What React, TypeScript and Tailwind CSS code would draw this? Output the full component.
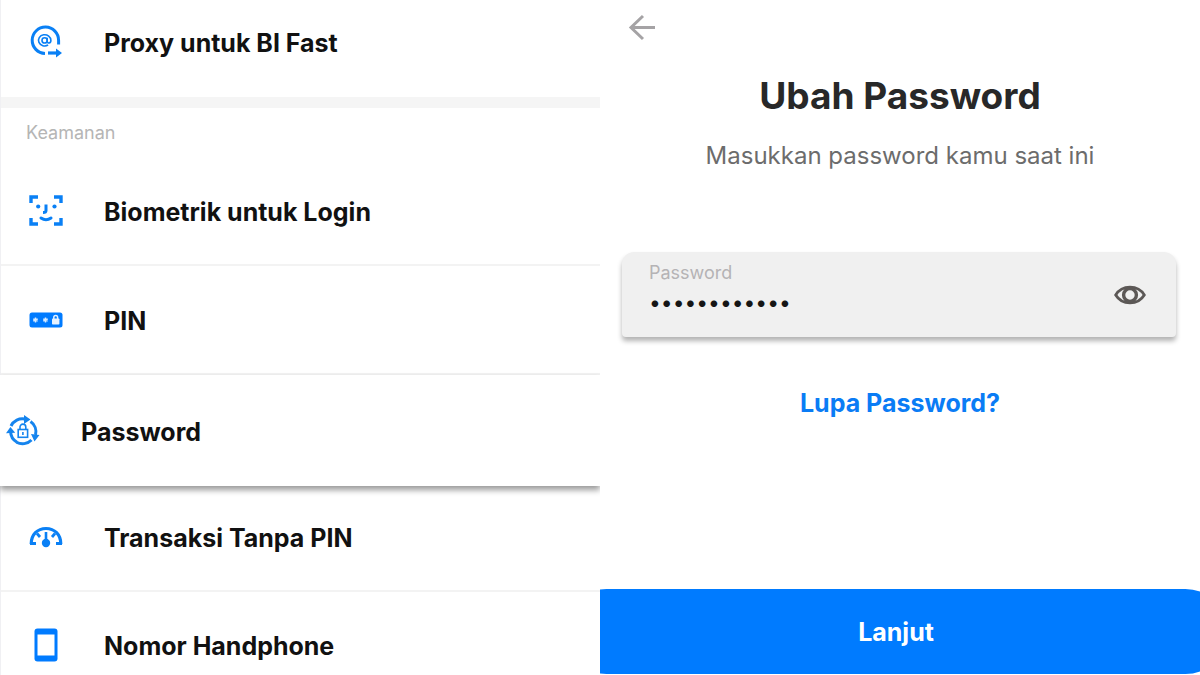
import React, { useState } from "react";
import clsx from "clsx";

interface MenuItemProps {
  icon: React.ReactNode;
  label: string;
  className?: string;
}

const ProxyIcon = () => (
  <svg viewBox="0 0 34 34" className="h-[34px] w-[34px]" fill="none" stroke="#0a80f5">
    <path d="M29.600 19.500V15.500A13.200 13.200 0 1 0 16 28.500" strokeWidth="3" />
    <path d="M19 28h9" strokeWidth="3.2" />
    <path d="M27 23.400 33 28l-6 4.600z" fill="#0a80f5" stroke="none" />
    <circle cx="15.6" cy="15.4" r="2.6" strokeWidth="1.6" />
    <path d="M18.2 12.8v3.4c0 2.6 3.7 2.2 3.7-.8a6.2 5.6 0 1 0-2.8 4.6" strokeWidth="1.6" />
  </svg>
);

const FaceIcon = () => (
  <svg viewBox="0 0 34 32" className="h-8 w-[34px]" fill="none" stroke="#0a80f5">
    <path d="M2 8V2h7M25 2h7v6M32 23v6h-7M9 29H2v-6" strokeWidth="3.4" />
    <path d="M17 9.5v6q0 2-3 2" strokeWidth="3" />
    <circle cx="9.2" cy="11.5" r="2.1" fill="#0a80f5" stroke="none" />
    <circle cx="25.5" cy="11.5" r="2.1" fill="#0a80f5" stroke="none" />
    <path d="M12 23q5 3.600 10 0" strokeWidth="3" strokeLinecap="round" />
  </svg>
);

const PinIcon = () => (
  <svg viewBox="0 0 34 16" className="h-4 w-[34px]">
    <rect x="0.5" y="0.5" width="33" height="15" rx="2.5" fill="#007bff" />
    <g stroke="#d6eaff" strokeWidth="1.5">
      <path d="M6.5 5.5v5M4.3 6.8l4.4 2.4M8.7 6.8 4.3 9.2" />
      <path d="M16.5 5.5v5M14.3 6.8l4.4 2.4M18.7 6.8l-4.4 2.4" />
    </g>
    <rect x="23" y="6.500" width="7.4" height="6" rx="0.8" fill="#e6f2ff" />
    <path d="M24.8 7V5.500a1.900 1.900 0 0 1 3.800 0V7" fill="none" stroke="#e6f2ff" strokeWidth="1.5" />
  </svg>
);

const PasswordIcon = () => (
  <svg viewBox="0 0 34 32" className="h-8 w-[34px]" fill="none" stroke="#1584ee">
    <path d="M5 11A12.5 12.5 0 0 1 19 4" strokeWidth="3" />
    <path d="M24.5 6.5A12.5 12.5 0 0 1 29.5 20" strokeWidth="3" />
    <path d="M4.6 16.5A12.5 12.5 0 0 0 11 27.2" strokeWidth="3" />
    <path d="M10.500 27.200A12.500 12.500 0 0 0 25.500 25" strokeWidth="3" />
    <path d="m18 0 6.5 4.5-6.5 4.5zM25 19l8.5 1-5 6.5zM0 18.2 4.4 12l4.8 5.8z" fill="#1584ee" stroke="none" />
    <rect x="12.2" y="14.5" width="9.4" height="7.8" strokeWidth="1.6" />
    <path d="M14 14.5V12a2.9 2.9 0 0 1 5.8 0v2.5M16.9 17v3" strokeWidth="1.6" />
  </svg>
);

const GaugeIcon = () => (
  <svg viewBox="0 0 34 22" className="h-[22px] w-[34px]" fill="none" stroke="#0a80f5">
    <path d="M2.2 18C2.2 8.5 8.5 2.5 17 2.5S31.8 8.5 31.8 18" strokeWidth="3.2" />
    <path d="M1 17.500h6M27 17.500h6M8 7.500l3 3.500M26 7.500l-3 3.500" strokeWidth="2.8" />
    <path d="M17 6v12" strokeWidth="2.6" />
    <circle cx="17" cy="17" r="4.2" fill="#0a80f5" stroke="none" />
  </svg>
);

const PhoneIcon = () => (
  <svg viewBox="0 0 24 34" className="h-[34px] w-6">
    <rect x="0.5" y="0.5" width="23" height="33" rx="3" fill="#007bff" />
    <rect x="3.5" y="6.5" width="17" height="21" fill="#fff" />
  </svg>
);

const EyeIcon = () => (
  <svg viewBox="0 0 32 20" className="h-5 w-8" fill="none" stroke="#5c5856">
    <path d="M1.7 10C8 -.5 24 -.5 30.3 10 24 20.5 8 20.5 1.7 10z" strokeWidth="2.8" />
    <circle cx="16" cy="10" r="6.4" strokeWidth="3.4" />
  </svg>
);

const MenuItem: React.FC<MenuItemProps> = ({ icon, label, className }) => (
  <li className={clsx("flex", className)}>
    <button className="flex w-full items-center text-left text-[25px] font-bold text-[#111]">
      <span className="mr-10 flex w-9 shrink-0 justify-center pb-1">{icon}</span>
      {label}
    </button>
  </li>
);

export default function App() {
  const [password, setPassword] = useState("rahasia12345");
  const [visible, setVisible] = useState(false);

  return (
    <div className="grid min-h-screen grid-cols-2 overflow-hidden bg-white font-['Inter',sans-serif]">
      {/* Settings menu */}
      <nav className="border-l border-[#f0f0f3]">
        <ul>
          <MenuItem icon={<ProxyIcon />} label="Proxy untuk BI Fast" className="h-[97px] pb-[10px] pl-[27px]" />
        </ul>
        <div className="h-[11px] bg-[#f5f5f5]" />
        <h2 className="pt-[13px] pl-[25px] text-lg leading-6 text-[#b5b5b5]">Keamanan</h2>
        <ul className="pt-3">
          <MenuItem icon={<FaceIcon />} label="Biometrik untuk Login" className="h-[109px] border-b-2 border-[#f3f3f3] pt-1 pl-[27px]" />
          <MenuItem icon={<PinIcon />} label="PIN" className="h-[109px] border-b-2 border-[#f3f3f3] pt-1 pl-[27px]" />
          <MenuItem
            icon={<PasswordIcon />}
            label="Password"
            className="relative -ml-px h-[111px] bg-white pt-1 pl-[5px] shadow-[0_4px_6px_rgba(0,0,0,0.4)]"
          />
          <MenuItem icon={<GaugeIcon />} label="Transaksi Tanpa PIN" className="h-[106px] border-b-2 border-[#f3f3f3] pt-[2px] pl-[27px]" />
          <MenuItem icon={<PhoneIcon />} label="Nomor Handphone" className="pt-9 pl-[27px]" />
        </ul>
      </nav>

      {/* Change password */}
      <main className="relative flex flex-col overflow-hidden bg-white">
        <button aria-label="Kembali" className="mt-3 ml-7 w-7">
          <svg viewBox="0 0 28 32" className="h-8 w-7" fill="none" stroke="#a5a3a5" strokeWidth="3">
            <path d="M27 15.5H3M15 4 3 15.5 15 27" />
          </svg>
        </button>
        <h1 className="mt-8 text-center text-[37px] leading-10 font-bold text-[#282828]">Ubah Password</h1>
        <p className="mt-6 text-center text-2xl text-[#6c6c6c]">Masukkan password kamu saat ini</p>

        <div className="mt-20 mr-6 ml-[22px] flex h-[85px] items-center rounded-t-xl rounded-b-sm bg-[#f0f0f0] pr-[30px] pl-[27px] shadow-[0_4px_5px_rgba(0,0,0,0.3)]">
          <div className="flex min-w-0 flex-1 flex-col pb-2">
            <label htmlFor="password" className="text-lg leading-6 text-[#b5b3b5]">
              Password
            </label>
            <input
              id="password"
              type={visible ? "text" : "password"}
              value={password}
              onChange={(e) => setPassword(e.target.value)}
              className="h-9 bg-transparent text-[21px] text-[#151515] outline-none"
            />
          </div>
          <button aria-label="Tampilkan password" onClick={() => setVisible(!visible)}>
            <EyeIcon />
          </button>
        </div>

        <a href="#" className="mt-12 self-center text-[25px] font-bold text-[#0a7cf5]">
          Lupa Password?
        </a>

        <button className="mt-auto -mr-7 -ml-9 mb-px h-[85px] rounded-full bg-[#007bff] pt-[2px] text-[25px] font-bold text-white">
          Lanjut
        </button>
      </main>
    </div>
  );
}
